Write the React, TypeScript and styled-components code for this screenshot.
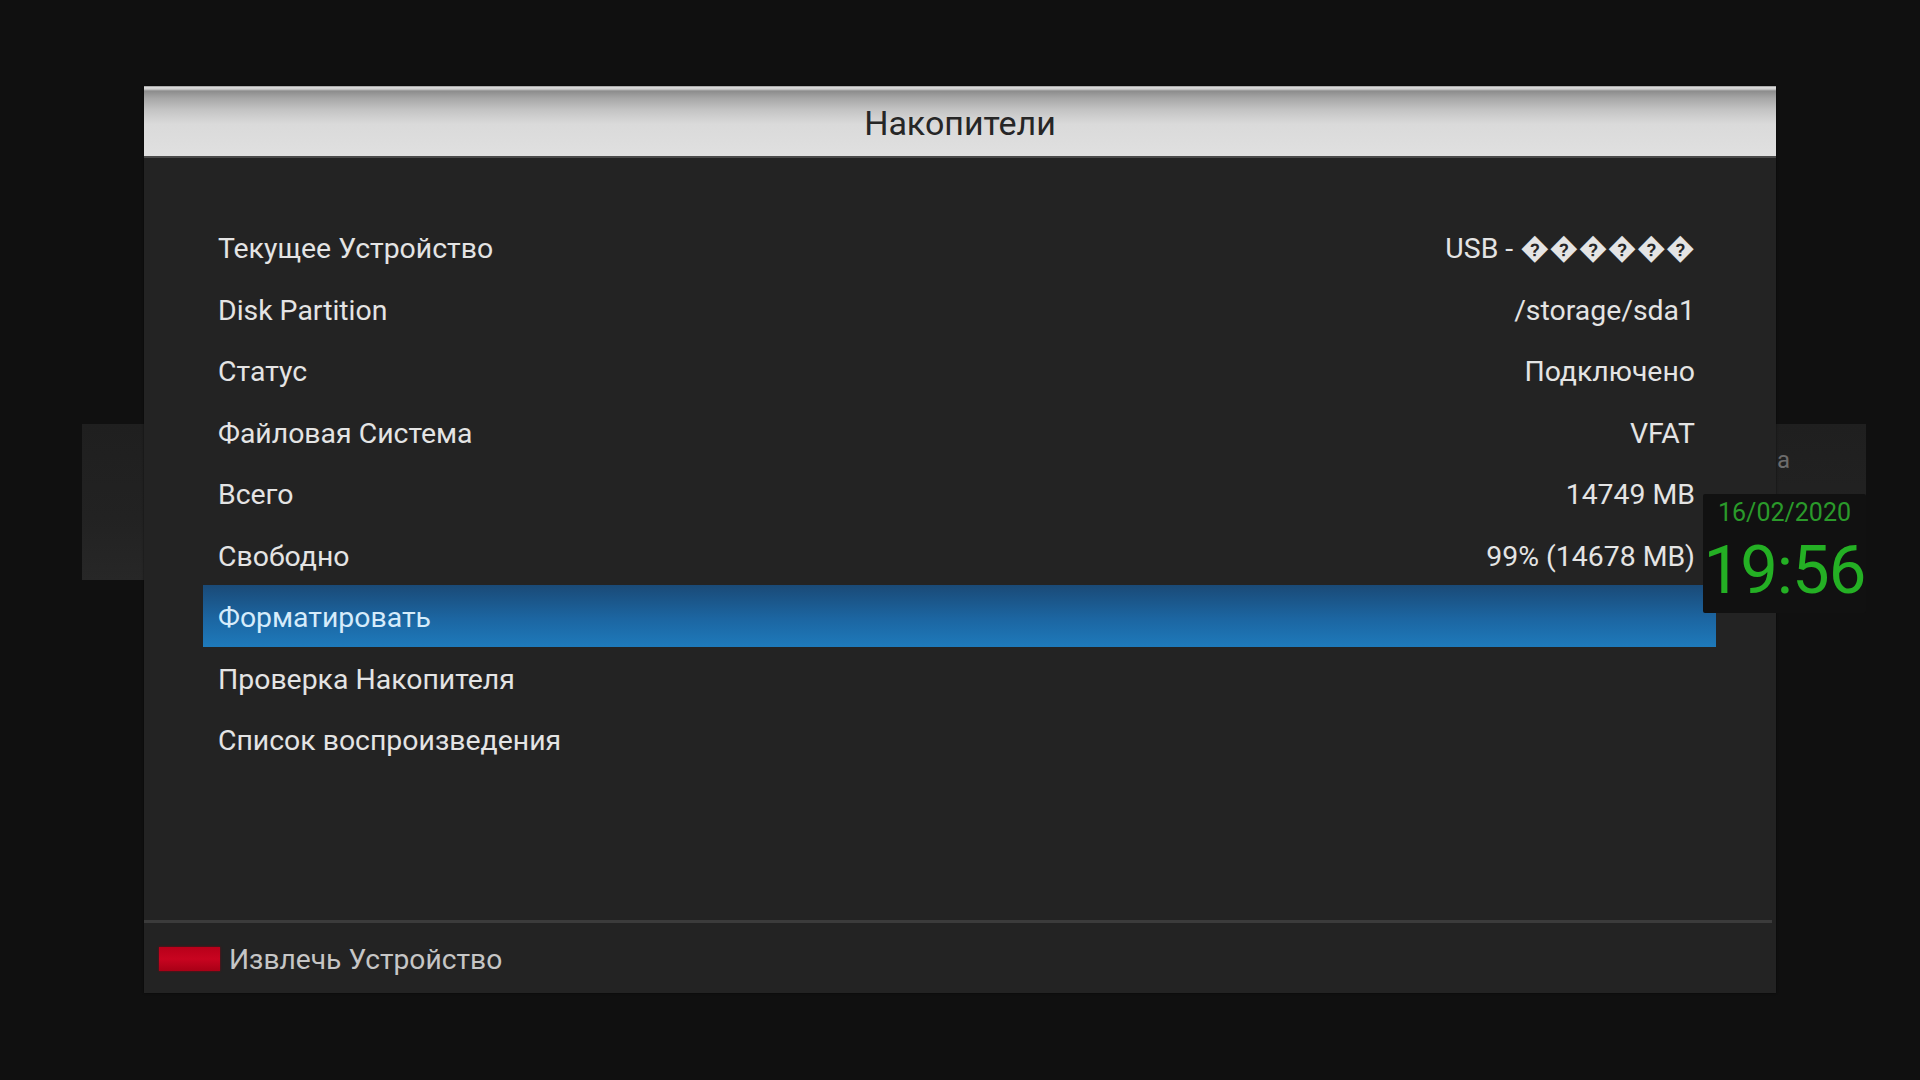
import styled, { createGlobalStyle } from 'styled-components';

const GlobalStyle = createGlobalStyle`
  html, body {
    margin: 0;
    padding: 0;
    background: #101010;
  }
  body {
    font-family: Roboto, "Noto Sans", "DejaVu Sans", sans-serif;
  }
`;

const Screen = styled.div`
  position: relative;
  width: 1920px;
  height: 1080px;
  box-sizing: border-box;
  padding: 86px 0 0 144px;
  background: #101010;
  overflow: hidden;
`;

/* strip of the menu that sits under the dialog */
const BackMenu = styled.div`
  position: absolute;
  left: 82px;
  top: 424px;
  width: 1784px;
  height: 156px;
  background: linear-gradient(180deg, #1f1f1f 0%, #222 60%, #272727 100%);
`;

const BackLabel = styled.span`
  position: absolute;
  left: 1695px;
  top: 22px;
  font-size: 24px;
  color: #6c6c6c;
`;

const Dialog = styled.div`
  position: relative;
  z-index: 1;
  width: 1632px;
  height: 907px;
  display: flex;
  flex-direction: column;
  background: #232323;
  box-shadow: 0 0 2px rgba(0, 0, 0, 0.6);
`;

const TitleBar = styled.div`
  height: 70px;
  display: flex;
  align-items: center;
  justify-content: center;
  border-bottom: 2px solid #4a4a4a;
  background: linear-gradient(
    180deg,
    #7a7a7a 0px,
    #dcdcdc 1px,
    #d0d0d0 3px,
    #8c8c8c 5px,
    #a6a6a6 12px,
    #c4c4c4 24px,
    #dadada 38px,
    #e0e0e0 100%
  );
`;

const Title = styled.h1`
  margin: 0;
  padding-top: 3px;
  font-size: 34px;
  font-weight: 400;
  color: #262626;
`;

const List = styled.div`
  flex: 1;
  display: flex;
  flex-direction: column;
  padding: 58px 60px 0 59px;
`;

const Row = styled.div<{ $active?: boolean }>`
  height: 61.5px;
  box-sizing: border-box;
  flex-shrink: 0;
  display: flex;
  align-items: center;
  justify-content: space-between;
  padding: 4px 21px 0 15px;
  font-size: 28.4px;
  color: ${({ $active }) => ($active ? '#d6ecfb' : '#e4e4e4')};
  background: ${({ $active }) =>
    $active ? 'linear-gradient(180deg, #1a4a77 0%, #1c66a2 55%, #1e7abb 100%)' : 'transparent'};
`;

const Value = styled.span`
  white-space: pre;
`;

const Separator = styled.div`
  height: 3px;
  margin-right: 4px;
  background: #3b3b3b;
`;

const Footer = styled.div`
  height: 70px;
  display: flex;
  align-items: center;
  gap: 9px;
  padding-left: 15px;
`;

const RedKey = styled.span`
  width: 61px;
  height: 24px;
  margin-top: 1px;
  background: linear-gradient(180deg, #b8001a 0%, #c80420 50%, #a80016 100%);
  box-shadow: 0 0 2px #8a0012;
`;

const FooterText = styled.span`
  font-size: 28.2px;
  padding-top: 2px;
  color: #c6c6c6;
`;

const Clock = styled.div`
  position: absolute;
  z-index: 2;
  left: 1703px;
  top: 494px;
  width: 163px;
  height: 119px;
  display: flex;
  flex-direction: column;
  align-items: center;
  background: #111;
  border-radius: 2px;
`;

const ClockDate = styled.div`
  margin-top: 4px;
  font-size: 25px;
  color: #2a9a2a;
`;

const ClockTime = styled.div`
  margin-top: 4px;
  font-size: 67px;
  line-height: 78px;
  letter-spacing: -1px;
  color: #24b024;
`;

const rows: { label: string; value?: string }[] = [
  { label: 'Текущее Устройство', value: 'USB - \uFFFD\uFFFD\uFFFD\uFFFD\uFFFD\uFFFD' },
  { label: 'Disk Partition', value: '/storage/sda1' },
  { label: 'Статус', value: 'Подключено' },
  { label: 'Файловая Система', value: 'VFAT' },
  { label: 'Всего', value: '14749 MB' },
  { label: 'Свободно', value: '99% (14678 MB)' },
  { label: 'Форматировать' },
  { label: 'Проверка Накопителя' },
  { label: 'Список воспроизведения' },
];

export default function App() {
  return (
    <Screen>
      <GlobalStyle />
      <BackMenu>
        <BackLabel>a</BackLabel>
      </BackMenu>

      <Dialog>
        <TitleBar>
          <Title>Накопители</Title>
        </TitleBar>

        <List>
          {rows.map((r, i) => (
            <Row key={r.label} $active={i === 6}>
              <span>{r.label}</span>
              {r.value && <Value>{r.value}</Value>}
            </Row>
          ))}
        </List>

        <Separator />
        <Footer>
          <RedKey />
          <FooterText>Извлечь Устройство</FooterText>
        </Footer>
      </Dialog>

      <Clock>
        <ClockDate>16/02/2020</ClockDate>
        <ClockTime>19:56</ClockTime>
      </Clock>
    </Screen>
  );
}
